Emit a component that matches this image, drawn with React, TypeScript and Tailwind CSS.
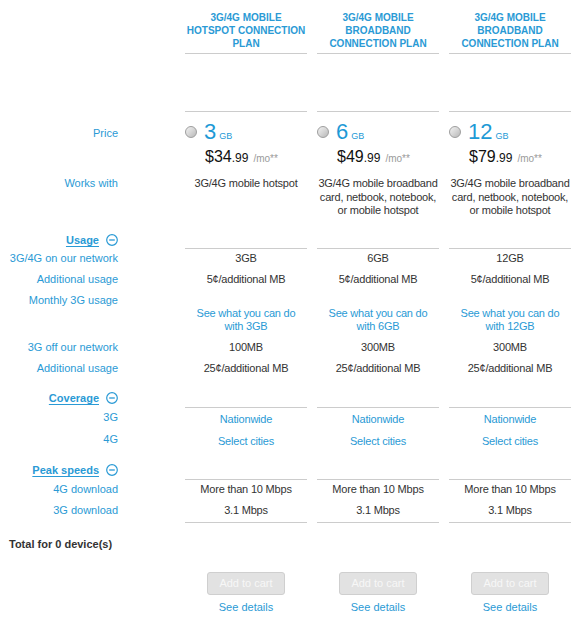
import React from "react";

const G = "grid grid-cols-[175px_122px_122px_122px] gap-x-[10px]";

type Plan = {
  title: React.ReactNode;
  gb: string;
  dollars: string;
  works: React.ReactNode;
  amount: string;
  offNet: string;
};

const plans: Plan[] = [
  {
    title: (
      <>
        3G/4G MOBILE
        <br />
        HOTSPOT CONNECTION
        <br />
        PLAN
      </>
    ),
    gb: "3",
    dollars: "$34",
    works: <>3G/4G mobile hotspot</>,
    amount: "3GB",
    offNet: "100MB",
  },
  {
    title: (
      <>
        3G/4G MOBILE
        <br />
        BROADBAND
        <br />
        CONNECTION PLAN
      </>
    ),
    gb: "6",
    dollars: "$49",
    works: (
      <>
        3G/4G mobile broadband
        <br />
        card, netbook, notebook,
        <br />
        or mobile hotspot
      </>
    ),
    amount: "6GB",
    offNet: "300MB",
  },
  {
    title: (
      <>
        3G/4G MOBILE
        <br />
        BROADBAND
        <br />
        CONNECTION PLAN
      </>
    ),
    gb: "12",
    dollars: "$79",
    works: (
      <>
        3G/4G mobile broadband
        <br />
        card, netbook, notebook,
        <br />
        or mobile hotspot
      </>
    ),
    amount: "12GB",
    offNet: "300MB",
  },
];

function MinusIcon() {
  return (
    <svg width="12" height="12" viewBox="0 0 12 12" className="shrink-0">
      <circle cx="6" cy="6" r="5.3" fill="none" stroke="#2a9ad5" strokeWidth="1.2" />
      <line x1="3.2" y1="6" x2="8.8" y2="6" stroke="#2a9ad5" strokeWidth="1.3" />
    </svg>
  );
}

function Radio() {
  return (
    <span className="block h-[12px] w-[12px] shrink-0 rounded-full border border-[#9e9e9e] bg-gradient-to-br from-[#f2f2f2] via-[#d6d6d6] to-[#b8b8b8]" />
  );
}

function Heading({ text }: { text: string }) {
  return (
    <div className={G + " h-[28px]"}>
      <div className="flex h-[28px] items-start justify-end gap-[7px] pr-[57px] pt-[11px]">
        <span className="text-[11px] font-bold leading-[14px] text-[#2a9ad5] underline underline-offset-2">
          {text}
        </span>
        <span className="pt-[1px]">
          <MinusIcon />
        </span>
      </div>
      {plans.map((_, i) => (
        <div key={i} className="h-[28px] border-b border-[#cccccc]" />
      ))}
    </div>
  );
}

function DataRow({
  label,
  values,
  blue,
  last,
  tall,
}: {
  label: string;
  values: React.ReactNode[];
  blue?: boolean;
  last?: boolean;
  tall?: boolean;
}) {
  return (
    <div className={G}>
      <div className="pr-[57px] pt-[3px] text-right text-[11px] leading-[13px] text-[#2a9ad5]">{label}</div>
      {values.map((v, i) => (
        <div
          key={i}
          className={
            (tall ? "pt-[5px] pb-[4px] " : "pt-[3px] pb-[5px] ") +
            (last ? "border-b border-[#cccccc] " : "") +
            (blue ? "text-[#2a9ad5] " : "text-[#333333] ") +
            "text-center text-[11px] leading-[13px] tracking-[-0.2px]"
          }
        >
          {v}
        </div>
      ))}
    </div>
  );
}

export default function App() {
  return (
    <div className="w-[578px] min-h-[638px] bg-white [font-family:'Liberation_Sans',Arial,sans-serif]">
      {/* Header */}
      <div className={G}>
        <div />
        {plans.map((p, i) => (
          <div
            key={i}
            className="h-[54px] border-b border-[#cccccc] pt-[11px] text-center text-[10px] font-bold leading-[13px] text-[#2a9ad5]"
          >
            {p.title}
          </div>
        ))}
      </div>
      {/* Spacer */}
      <div className={G}>
        <div />
        {plans.map((_, i) => (
          <div key={i} className="h-[58px] border-b border-[#cccccc]" />
        ))}
      </div>
      {/* Price */}
      <div className={G + " h-[65px]"}>
        <div className="pr-[57px] pt-[9px] text-right text-[11px] leading-[24px] text-[#2a9ad5]">Price</div>
        {plans.map((p, i) => (
          <div key={i} className="h-[65px] pt-[8px]">
            <div className="flex h-[24px] items-center">
              <Radio />
              <span className="ml-[7px] flex h-[24px] items-baseline">
                <span className="text-[22px] leading-[24px] text-[#1e9ad6]">{p.gb}</span>
                <span className="ml-[3px] text-[9px] leading-[24px] text-[#1e9ad6]">GB</span>
              </span>
            </div>
            <div className="mt-[4px] flex h-[18px] items-baseline pl-[20px] leading-[18px]">
              <span className="text-[16px] text-[#111111]">{p.dollars}</span>
              <span className="text-[12px] text-[#111111]">.99</span>
              <span className="ml-[5px] text-[10px] text-[#9a9a9a]">/mo**</span>
            </div>
          </div>
        ))}
      </div>
      {/* Works with */}
      <div className={G + " h-[49px]"}>
        <div className="pr-[57px] text-right text-[11px] leading-[13.5px] text-[#2a9ad5]">Works with</div>
        {plans.map((p, i) => (
          <div
            key={i}
            className="whitespace-nowrap text-center text-[11px] leading-[13.5px] tracking-[-0.2px] text-[#333333]"
          >
            {p.works}
          </div>
        ))}
      </div>
      {/* Usage */}
      <div className={G + " h-[23px]"}>
        <div className="flex h-[23px] items-start justify-end gap-[7px] pr-[57px] pt-[7px]">
          <span className="text-[11px] font-bold leading-[14px] text-[#2a9ad5] underline underline-offset-2">
            Usage
          </span>
          <span className="pt-[1px]">
            <MinusIcon />
          </span>
        </div>
        {plans.map((_, i) => (
          <div key={i} className="h-[23px] border-b border-[#cccccc]" />
        ))}
      </div>
      <DataRow label="3G/4G on our network" values={plans.map((p) => p.amount)} />
      <DataRow label="Additional usage" values={plans.map(() => "5¢/additional MB")} />
      <div className={G}>
        <div className="pr-[57px] pt-[3px] text-right text-[11px] leading-[13px] text-[#2a9ad5]">Monthly 3G usage</div>
        {plans.map((p, i) => (
          <div
            key={i}
            className="pt-[16px] pb-[5px] text-center text-[11px] leading-[13px] tracking-[-0.2px] text-[#2a9ad5]"
          >
            See what you can do
            <br />
            with {p.amount}
          </div>
        ))}
      </div>
      <DataRow label="3G off our network" values={plans.map((p) => p.offNet)} />
      <DataRow label="Additional usage" values={plans.map(() => "25¢/additional MB")} />
      {/* Coverage */}
      <Heading text="Coverage" />
      <DataRow label="3G" values={plans.map(() => "Nationwide")} blue tall />
      <DataRow label="4G" values={plans.map(() => "Select cities")} blue tall />
      {/* Peak speeds */}
      <Heading text="Peak speeds" />
      <DataRow label="4G download" values={plans.map(() => "More than 10 Mbps")} />
      <DataRow label="3G download" values={plans.map(() => "3.1 Mbps")} last />
      {/* Total */}
      <div className="pl-[9px] pt-[14px] text-[11px] font-bold leading-[14px] text-[#333333]">
        Total for 0 device(s)
      </div>
      <div className={G + " mt-[21px]"}>
        <div />
        {plans.map((_, i) => (
          <div key={i} className="flex flex-col items-center">
            <button
              disabled
              className="h-[23px] w-[78px] rounded-[3px] border border-[#cfcfcf] bg-[#e2e2e2] text-[11px] leading-[21px] text-[#f7f7f7]"
            >
              Add to cart
            </button>
            <span className="mt-[6px] text-[11px] leading-[13px] text-[#2a9ad5]">See details</span>
          </div>
        ))}
      </div>
    </div>
  );
}
